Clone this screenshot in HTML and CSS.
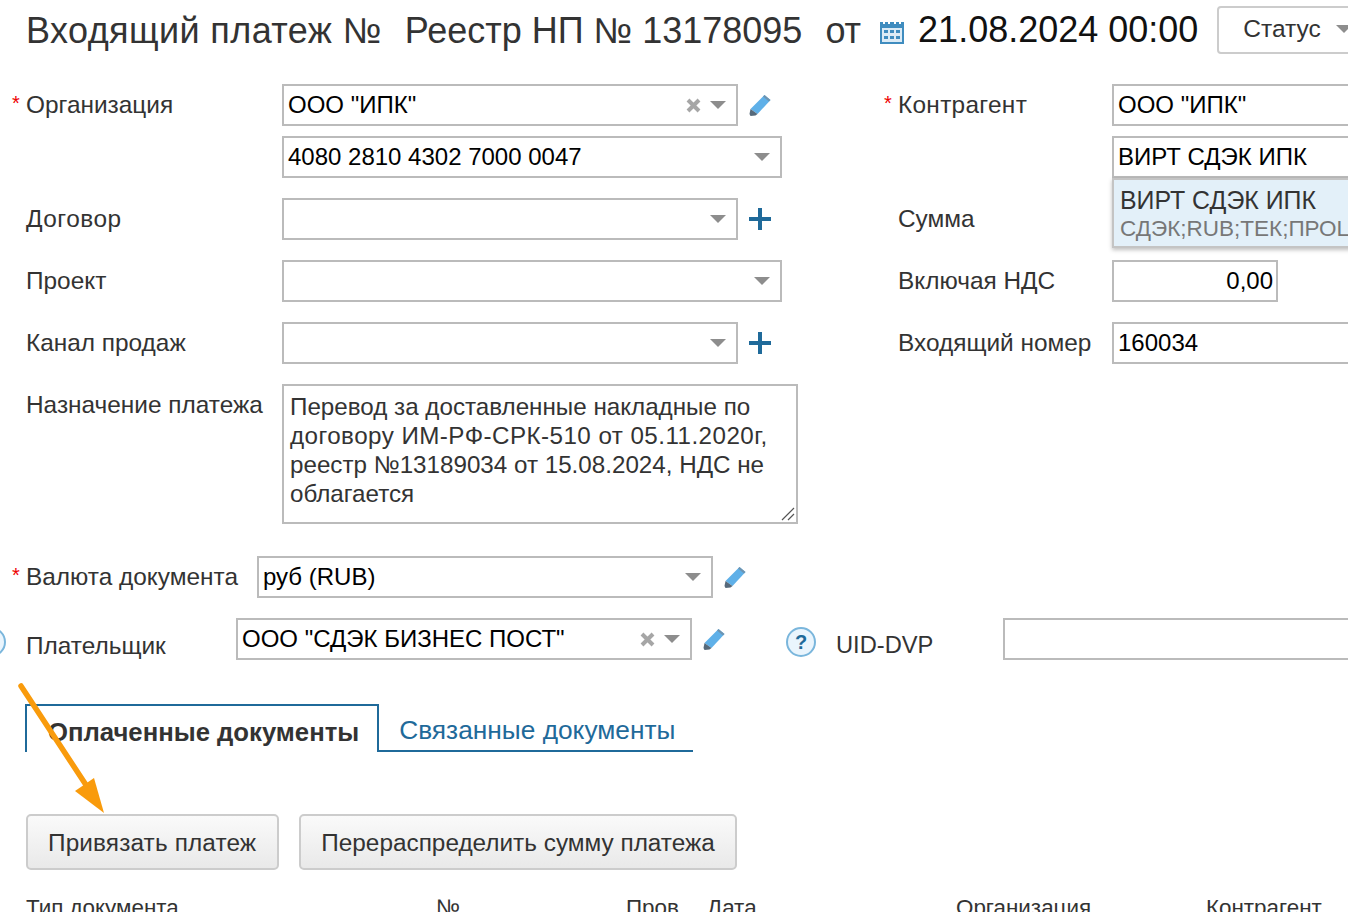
FILE: index.html
```html
<!DOCTYPE html>
<html lang="ru">
<head>
    <meta charset="UTF-8">
    <title>Входящий платеж</title>
    <link rel="stylesheet" href="styles.css">
</head>
<body>

<svg width="0" height="0" class="defs">
    <symbol id="pencil" viewBox="0 0 22 22">
        <path d="M15.500 1L21.500 6 8.500 20 1.500 15z" fill="#5fb0e8"/>
        <path d="M1.500 15l7 5-2 1.500-5 .5-1-2z" fill="#56697a"/>
        <path d="M15.500 1l6 5-1.500 1.500-6-5z" fill="#6f94b0"/>
    </symbol>
    <symbol id="cross" viewBox="0 0 15 15">
        <path d="M2 2l11 11M13 2L2 13" stroke="#a6a6a6" stroke-width="4" fill="none"/>
    </symbol>
</svg>

<div class="page">
    <div class="doc-head">
        <span class="doc-title doc-title-first">Входящий платеж №</span>
        <span class="doc-title">Реестр НП № 13178095</span>
        <span class="doc-title">от</span>
        <svg class="cal-icon" width="24" height="26" viewBox="0 0 24 26">
            <rect x="0" y="4" width="24" height="22" fill="#3f8cbf"/>
            <rect x="2" y="10" width="20" height="14" fill="#dcebf6"/>
            <g fill="#fff"><rect x="3" y="1" width="2" height="5"/><rect x="8" y="1" width="2" height="5"/><rect x="14" y="1" width="2" height="5"/><rect x="19" y="1" width="2" height="5"/></g>
            <g fill="#3f8cbf">
                <rect x="4" y="12" width="4" height="3"/><rect x="10" y="12" width="4" height="3"/><rect x="16" y="12" width="4" height="3"/>
                <rect x="4" y="18" width="4" height="3"/><rect x="10" y="18" width="4" height="3"/><rect x="16" y="18" width="4" height="3"/>
            </g>
        </svg>
        <span class="doc-date">21.08.2024 00:00</span>
        <button class="status-btn">Статус<i class="caret"></i></button>
    </div>

    <div class="form-cols">
        <div class="col-left">
            <div class="row">
                <span class="star">*</span><label class="lbl">Организация</label>
                <div class="field w-short">ООО "ИПК"<svg class="clear"><use href="#cross"/></svg><i class="caret"></i></div>
                <svg class="edit"><use href="#pencil"/></svg>
            </div>
            <div class="row row-tight">
                <span class="star"></span><label class="lbl"></label>
                <div class="field w-long">4080 2810 4302 7000 0047<i class="caret"></i></div>
            </div>
            <div class="row">
                <span class="star"></span><label class="lbl lbl-loose">Договор</label>
                <div class="field w-short"><i class="caret"></i></div>
                <span class="plus"></span>
            </div>
            <div class="row">
                <span class="star"></span><label class="lbl">Проект</label>
                <div class="field w-long"><i class="caret"></i></div>
            </div>
            <div class="row">
                <span class="star"></span><label class="lbl">Канал продаж</label>
                <div class="field w-short"><i class="caret"></i></div>
                <span class="plus"></span>
            </div>
            <div class="row row-top">
                <span class="star"></span><label class="lbl">Назначение платежа</label>
                <div class="textarea">Перевод за доставленные накладные по <span class="ta-wide">договору ИМ-РФ-СРК-510 от 05.11.2020г,</span> реестр №13189034 от 15.08.2024, НДС не облагается
                    <svg class="grip" width="16" height="16" viewBox="0 0 16 16"><path d="M2 14L14 2M8 14l6-6" stroke="#555" stroke-width="1.200" fill="none"/></svg>
                </div>
            </div>
        </div>

        <div class="col-right">
            <div class="row">
                <span class="star">*</span><label class="lbl lbl-right lbl-loose-sm">Контрагент</label>
                <div class="field w-open">ООО "ИПК"</div>
            </div>
            <div class="row row-tight">
                <span class="star"></span><label class="lbl lbl-right"></label>
                <div class="field w-open">ВИРТ СДЭК ИПК</div>
                <div class="suggest">
                    <div class="suggest-name">ВИРТ СДЭК ИПК</div>
                    <div class="suggest-sub">СДЭК;RUB;ТЕК;ПРОЦ</div>
                </div>
            </div>
            <div class="row">
                <span class="star"></span><label class="lbl lbl-right">Сумма</label>
            </div>
            <div class="row">
                <span class="star"></span><label class="lbl lbl-right">Включая НДС</label>
                <div class="field w-num">0,00</div>
            </div>
            <div class="row">
                <span class="star"></span><label class="lbl lbl-right">Входящий номер</label>
                <div class="field w-open">160034</div>
            </div>
        </div>
    </div>

    <div class="row row-currency">
        <span class="star">*</span><label class="lbl lbl-auto">Валюта документа</label>
        <div class="field w-short">руб (RUB)<i class="caret"></i></div>
        <svg class="edit"><use href="#pencil"/></svg>
    </div>

    <div class="row row-payer">
        <span class="help help-cut">?</span>
        <label class="lbl lbl-payer">Плательщик</label>
        <div class="field w-short">ООО "СДЭК БИЗНЕС ПОСТ"<svg class="clear"><use href="#cross"/></svg><i class="caret"></i></div>
        <svg class="edit"><use href="#pencil"/></svg>
        <span class="help">?</span>
        <label class="lbl lbl-uid">UID-DVP</label>
        <div class="field w-uid"></div>
    </div>

    <div class="tabs">
        <div class="tab tab-on">Оплаченные документы</div>
        <div class="tab">Связанные документы</div>
    </div>

    <div class="btn-row">
        <button class="btn btn-bind">Привязать платеж</button>
        <button class="btn">Перераспределить сумму платежа</button>
    </div>

    <div class="tbl-head">
        <span>Тип документа</span>
        <span>№</span>
        <span>Пров</span>
        <span>Дата</span>
        <span>Организация</span>
        <span>Контрагент</span>
    </div>

    <svg class="arrow" width="110" height="140" viewBox="0 0 110 140">
        <path d="M21 4L88 106" stroke="#f99b0c" stroke-width="5.500" stroke-linecap="round"/>
        <path d="M104 131L75 109L94 96Z" fill="#f99b0c"/>
    </svg>
</div>

</body>
</html>
```

FILE: styles.css
```css
html, body {
    margin: 0;
    height: 912px;
    overflow: hidden;
    background-color: #fff;
}

body {
    font-family: "Liberation Sans", Arial, sans-serif;
    color: #333;
}

.defs {
    display: block;
    height: 0;
}

.page {
    position: relative;
    width: 1348px;
    height: 912px;
    overflow: hidden;
}

.doc-head {
    display: flex;
    align-items: center;
    height: 48px;
    margin-top: 6px;
    padding-left: 26px;
    white-space: nowrap;
}

.doc-title {
    font-size: 36px;
    margin-right: 23px;
    padding-top: 2px;
}

.doc-title-first {
    letter-spacing: 0.4px;
}

.cal-icon {
    margin: 2px 14px 0 -4px;
    flex: none;
}

.doc-date {
    font-size: 36px;
    color: #111;
}

.status-btn {
    flex: none;
    display: flex;
    align-items: center;
    width: 160px;
    height: 48px;
    margin-left: 19px;
    padding: 0 0 2px 24px;
    background: #fff;
    border: 2px solid #ccc;
    border-radius: 4px;
    font: 24.500px "Liberation Sans", Arial, sans-serif;
    color: #333;
}

.status-btn .caret {
    position: static;
    margin-left: 15px;
}

.form-cols {
    display: flex;
    margin-top: 30px;
}

.col-left {
    width: 872px;
    flex: none;
}

.col-right {
    flex: 1;
    min-width: 0;
}

.row {
    position: relative;
    display: flex;
    align-items: center;
    min-height: 42px;
    padding-left: 12px;
    margin-bottom: 20px;
    white-space: nowrap;
}

.row-tight {
    margin-top: -10px;
}

.row-top {
    align-items: flex-start;
    margin-bottom: 32px;
}

.star {
    width: 14px;
    flex: none;
    align-self: flex-start;
    margin-top: 9px;
    font-size: 20px;
    line-height: 20px;
    color: #e00;
}

.lbl {
    width: 256px;
    flex: none;
    font-size: 24.400px;
}

.lbl-loose {
    letter-spacing: 0.5px;
}

.lbl-loose-sm {
    letter-spacing: 0.3px;
}

.row-top .lbl {
    margin-top: 7px;
}

.lbl-right {
    width: 214px;
}

.lbl-auto {
    width: 231px;
}

.field {
    position: relative;
    box-sizing: border-box;
    flex: none;
    height: 42px;
    line-height: 38px;
    padding-left: 4px;
    border: 2px solid #bbb;
    background-color: #fff;
    font-size: 24px;
    color: #000;
}

.w-short {
    width: 456px;
}

.w-long {
    width: 500px;
}

.w-open {
    width: 300px;
}

.w-num {
    width: 166px;
    padding-right: 3px;
    text-align: right;
}

.w-uid {
    width: 400px;
}

.caret {
    position: absolute;
    right: 10px;
    top: 15px;
    width: 0;
    height: 0;
    border-left: 8px solid transparent;
    border-right: 8px solid transparent;
    border-top: 8px solid #8d8d8d;
}

.clear {
    position: absolute;
    right: 35px;
    top: 12px;
    width: 15px;
    height: 15px;
}

.edit {
    flex: none;
    width: 22px;
    height: 22px;
    margin-left: 11px;
}

.plus {
    position: relative;
    flex: none;
    width: 22px;
    height: 22px;
    margin-left: 11px;
    background:
        linear-gradient(#1f6a9a, #1f6a9a) center / 100% 4px no-repeat,
        linear-gradient(#1f6a9a, #1f6a9a) center / 4px 100% no-repeat;
}

.textarea {
    position: relative;
    box-sizing: border-box;
    flex: none;
    width: 516px;
    height: 140px;
    padding: 6px 6px;
    border: 2px solid #bbb;
    font-size: 24.200px;
    line-height: 29px;
    white-space: normal;
    color: #333;
}

.ta-wide {
    letter-spacing: 0.45px;
}

.grip {
    position: absolute;
    right: 0;
    bottom: 0;
}

.suggest {
    position: absolute;
    top: 42px;
    left: 240px;
    box-sizing: border-box;
    width: 320px;
    height: 70px;
    padding: 6px 6px;
    background-color: #e3f0f9;
    border: 2px solid #c4c4c4;
    box-shadow: 0 2px 4px rgba(0, 0, 0, 0.25);
    overflow: hidden;
}

.suggest-name {
    font-size: 24.900px;
    line-height: 28px;
}

.suggest-sub {
    margin-top: 2px;
    font-size: 22.500px;
    line-height: 26px;
    color: #777;
}

.row-payer {
    padding-left: 0;
    margin-bottom: 0;
}

.help {
    box-sizing: border-box;
    flex: none;
    width: 30px;
    height: 30px;
    margin-left: 61px;
    margin-top: 6px;
    line-height: 26px;
    text-align: center;
    border: 2px solid #7ab6dc;
    border-radius: 50%;
    background-color: #eaf5fd;
    font-size: 20px;
    font-weight: bold;
    color: #1f6a9a;
}

.help-cut {
    margin-left: -24px;
}

.lbl-payer {
    width: 210px;
    margin-left: 20px;
    padding-top: 13px;
}

.lbl-uid {
    width: 167px;
    margin-left: 20px;
    padding-top: 13px;
    font-size: 23.700px;
}

.tabs {
    display: flex;
    align-items: flex-end;
    height: 48px;
    margin: 44px 0 0 25px;
    white-space: nowrap;
}

.tab {
    box-sizing: border-box;
    height: 48px;
    padding: 0 18px 0 20px;
    line-height: 52px;
    border-bottom: 2px solid #1f6a9a;
    font-size: 26.300px;
    color: #1f6a9a;
}

.tab-on {
    border: 2px solid #1f6a9a;
    border-bottom: 0;
    padding: 0 18px 0 21px;
    font-size: 25.700px;
    font-weight: bold;
    color: #333;
}

.btn-row {
    display: flex;
    gap: 20px;
    margin: 62px 0 0 26px;
}

.btn {
    height: 56px;
    padding: 2px 20px 0;
    border: 2px solid #ccc;
    border-radius: 5px;
    background: linear-gradient(#fafafa, #e9e9e9);
    font: 24.350px "Liberation Sans", Arial, sans-serif;
    color: #333;
}

.btn-bind {
    padding-right: 21px;
    letter-spacing: 0.14px;
}

.tbl-head {
    display: grid;
    grid-template-columns: 410px 190px 81px 249px 250px 1fr;
    margin: 25px 0 0 26px;
    font-size: 22.400px;
    white-space: nowrap;
}

.arrow {
    position: absolute;
    left: 0;
    top: 682px;
}
```
